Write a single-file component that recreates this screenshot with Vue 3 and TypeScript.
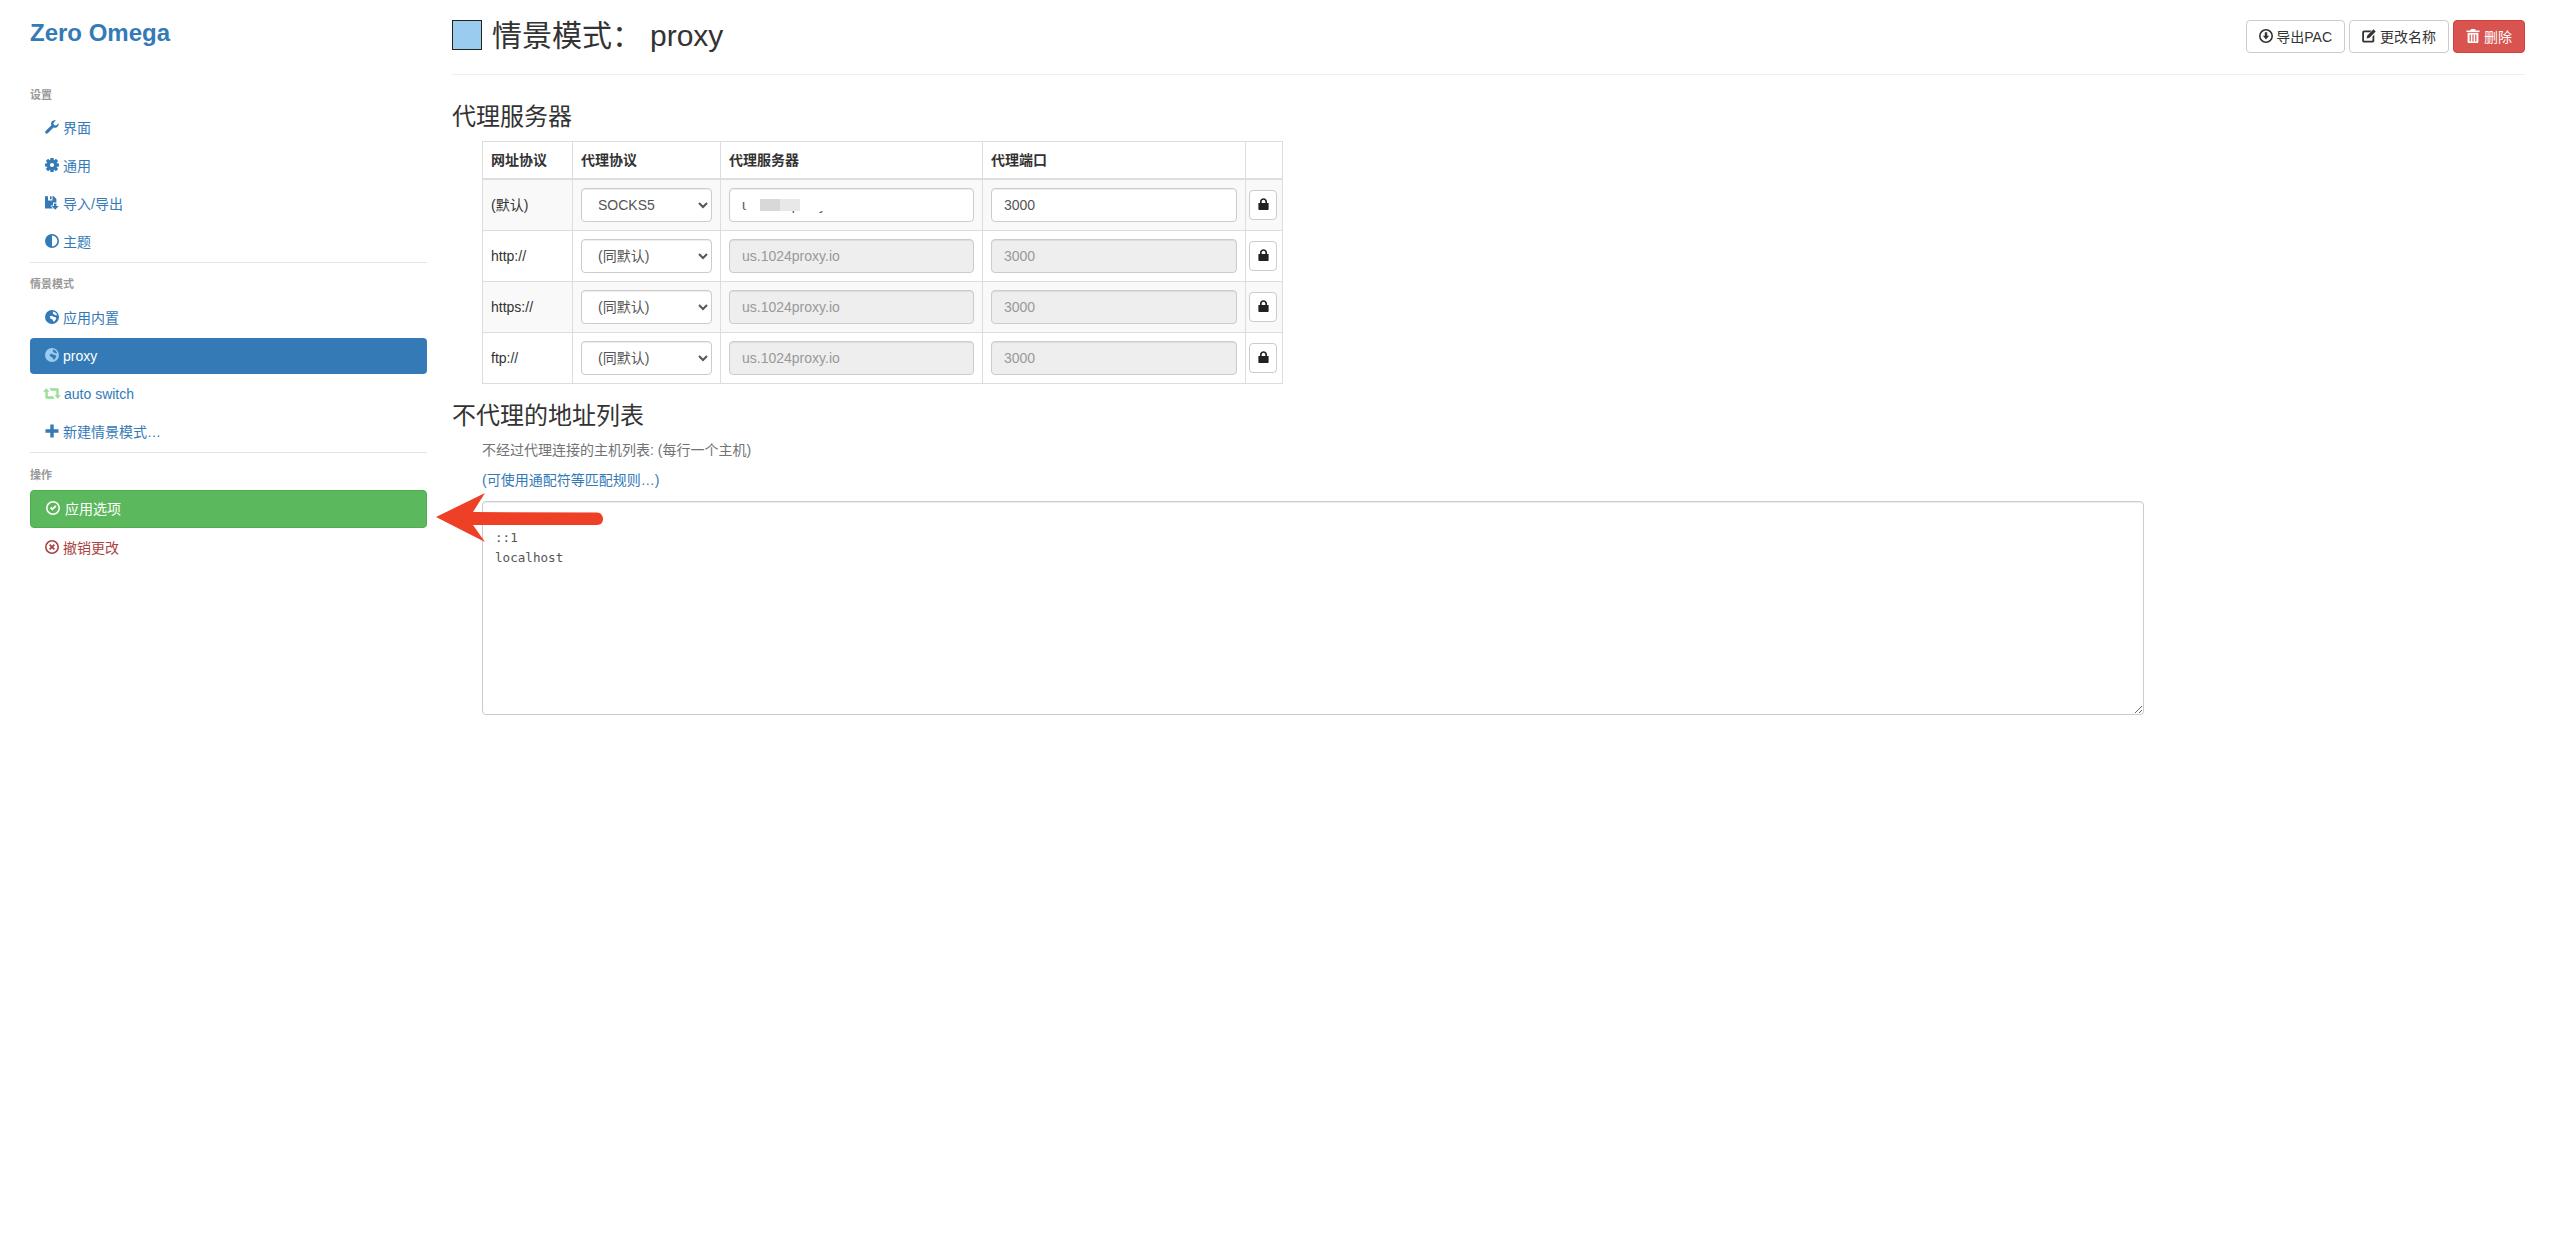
<script setup lang="ts">
function cogPath(): string {
  const teeth = 8
  const cx = 7
  const cy = 7
  let d = ''
  for (let i = 0; i < teeth; i++) {
    const a = (i / teeth) * Math.PI * 2
    const pts: [number, number][] = [
      [5.2, a - 0.36],
      [7.3, a - 0.22],
      [7.3, a + 0.22],
      [5.2, a + 0.36],
    ]
    for (const [r, t] of pts) {
      const x = (cx + r * Math.cos(t)).toFixed(2)
      const y = (cy + r * Math.sin(t)).toFixed(2)
      d += (d ? 'L' : 'M') + x + ' ' + y
    }
  }
  d += 'Z'
  d += 'M7 4.9A2.1 2.1 0 1 0 7 9.1A2.1 2.1 0 1 0 7 4.9Z'
  return d
}

const circle = 'M7 0A7 7 0 1 0 7 14A7 7 0 1 0 7 0Z'
const ringHole = 'M7 1.6A5.4 5.4 0 1 1 7 12.4A5.4 5.4 0 1 1 7 1.6Z'

const icons: Record<string, string> = {
  wrench:
    'M13.6 3.2L11.1 5.6L8.9 5L8.4 2.9L10.8.5C9 -.1 7.1.6 6.4 2.2C5.9 3.3 6 4.4 6.4 5.3L.6 11C0 11.7 0 12.6.6 13.2C1.2 13.8 2.1 13.8 2.8 13.2L8.5 7.6C9.6 8 10.8 8 11.8 7.3C13.2 6.4 14 4.8 13.6 3.2Z',
  cog: cogPath(),
  save: 'M0 .3H3V4.5H7.5V.3H8.9L11.4 3V6.5H8V9.5H5.5L7.8 12.5H0ZM5 .3H6.6V3.2H5ZM9 7.5H11.4V10H13.8L10.2 13.7L6.6 10H9Z',
  adjust: circle + 'M7 1.6A5.4 5.4 0 0 1 7 12.4Z',
  globe:
    circle +
    'M8 1.6C10 2 11.8 3.4 12.3 5.4L10.8 4.7L10.4 5.6L9 4.6L7.8 3.2ZM4.6 6.3L6.8 5.8L9 7L10.8 7.2L11.3 8.6L9.7 11.2L8.2 11.4L7.6 9.4L5.6 8.7Z',
  retweet:
    'M3.5 1L7 4.6H5V9.5H10.5L12.5 12H3.5C3 12 2.5 11.5 2.5 11V4.6H0ZM6.5 1H15.5C16 1 16.5 1.5 16.5 2V8.4H19L15.5 12L12 8.4H14V3.5H8.5Z',
  plus: 'M5.3 .5H8.7V5.3H13.5V8.7H8.7V13.5H5.3V8.7H.5V5.3H5.3Z',
  ok: circle + ringHole + 'M3.9 7.2L5.3 5.8L6.4 6.9L9.2 4.3L10.5 5.6L6.4 9.6Z',
  remove:
    circle +
    ringHole +
    'M4 5.3L5.3 4L7 5.7L8.7 4L10 5.3L8.3 7L10 8.7L8.7 10L7 8.3L5.3 10L4 8.7L5.7 7Z',
  download: circle + ringHole + 'M5.8 3.2H8.2V6.8H10.2L7 10.6L3.8 6.8H5.8Z',
  edit:
    'M2 1.5H9.5L8 3.3H2.6C2.3 3.3 2 3.6 2 3.9V11.2C2 11.5 2.3 11.8 2.6 11.8H9.9C10.2 11.8 10.5 11.5 10.5 11.2V7.5L12.3 5.8V11.8C12.3 12.9 11.4 13.6 10.4 13.6H2.2C1 13.6.2 12.8.2 11.7V3.4C.2 2.3 1 1.5 2 1.5ZM11.5.3L13.7 2.5L7.6 8.7L4.6 9.4L5.3 6.4Z',
  trash:
    'M5 0H9L9.6 1.4H13.5V3H.5V1.4H4.4ZM1.6 3.8H12.4V13C12.4 13.5 11.9 14 11.4 14H2.6C2.1 14 1.6 13.5 1.6 13ZM3.6 5.4V12.6H4.8V5.4ZM6.4 5.4V12.6H7.6V5.4ZM9.2 5.4V12.6H10.4V5.4Z',
  lock:
    'M3.2 5.5V4C3.2 2 5 .3 7 .3C9 .3 10.8 2 10.8 4V5.5H12.5V12.2C12.5 12.7 12.1 13 11.7 13H2.3C1.9 13 1.5 12.7 1.5 12.2V5.5ZM5 5.5H9V4C9 2.9 8 2 7 2C6 2 5 2.9 5 4Z',
}

const settings = [
  { icon: 'wrench', label: '界面' },
  { icon: 'cog', label: '通用' },
  { icon: 'save', label: '导入/导出' },
  { icon: 'adjust', label: '主题' },
]

const rows = [
  { scheme: '(默认)', proxy: 'SOCKS5', main: true },
  { scheme: 'http://', proxy: '(同默认)', main: false },
  { scheme: 'https://', proxy: '(同默认)', main: false },
  { scheme: 'ftp://', proxy: '(同默认)', main: false },
]

const bypass = '127.0.0.1\n::1\nlocalhost'
</script>

<template>
  <div class="page">
    <aside class="side">
      <h1 class="brand">Zero Omega</h1>

      <div class="nav-label first">设置</div>
      <a v-for="s in settings" :key="s.icon" class="nav-item">
        <svg class="ico" viewBox="0 0 14 14"><path :d="icons[s.icon]" fill-rule="evenodd" /></svg>
        <span>{{ s.label }}</span>
      </a>
      <div class="divider"></div>

      <div class="nav-label">情景模式</div>
      <a class="nav-item">
        <svg class="ico" viewBox="0 0 14 14"><path :d="icons.globe" fill-rule="evenodd" /></svg>
        <span>应用内置</span>
      </a>
      <a class="nav-item active">
        <svg class="ico light" viewBox="0 0 14 14"><path :d="icons.globe" fill-rule="evenodd" /></svg>
        <span>proxy</span>
      </a>
      <a class="nav-item">
        <svg class="ico retweet" viewBox="0 0 19 13"><path :d="icons.retweet" /></svg>
        <span>auto switch</span>
      </a>
      <a class="nav-item">
        <svg class="ico" viewBox="0 0 14 14"><path :d="icons.plus" /></svg>
        <span>新建情景模式…</span>
      </a>
      <div class="divider"></div>

      <div class="nav-label ops">操作</div>
      <a class="nav-item apply">
        <svg class="ico" viewBox="0 0 14 14"><path :d="icons.ok" fill-rule="evenodd" /></svg>
        <span>应用选项</span>
      </a>
      <a class="nav-item revert">
        <svg class="ico" viewBox="0 0 14 14"><path :d="icons.remove" fill-rule="evenodd" /></svg>
        <span>撤销更改</span>
      </a>
    </aside>

    <main class="main">
      <header class="head">
        <h2 class="title">
          <span class="swatch"></span>
          <span>情景模式：</span>
          <span class="name">proxy</span>
        </h2>
        <div class="actions">
          <button class="btn">
            <svg class="ico" viewBox="0 0 14 14"><path :d="icons.download" fill-rule="evenodd" /></svg>
            导出PAC
          </button>
          <button class="btn">
            <svg class="ico" viewBox="0 0 14 14"><path :d="icons.edit" fill-rule="evenodd" /></svg>
            更改名称
          </button>
          <button class="btn danger">
            <svg class="ico" viewBox="0 0 14 14"><path :d="icons.trash" fill-rule="evenodd" /></svg>
            删除
          </button>
        </div>
      </header>

      <h3 class="section first-section">代理服务器</h3>
      <table class="servers">
        <colgroup>
          <col class="c1" />
          <col class="c2" />
          <col class="c3" />
          <col class="c4" />
          <col class="c5" />
        </colgroup>
        <thead>
          <tr>
            <th>网址协议</th>
            <th>代理协议</th>
            <th>代理服务器</th>
            <th>代理端口</th>
            <th></th>
          </tr>
        </thead>
        <tbody>
          <tr v-for="r in rows" :key="r.scheme">
            <td>{{ r.scheme }}</td>
            <td>
              <select class="control">
                <option>{{ r.proxy }}</option>
              </select>
            </td>
            <td>
              <div class="host-wrap">
                <input class="control" type="text" value="us.1024proxy.io" :disabled="!r.main" />
                <div v-if="r.main" class="mask">
                  <i class="m1"></i><i class="m2"></i>
                </div>
              </div>
            </td>
            <td>
              <input class="control" type="text" value="3000" :disabled="!r.main" />
            </td>
            <td class="lock-cell">
              <button class="btn lock">
                <svg class="ico" viewBox="0 0 14 14"><path :d="icons.lock" fill-rule="evenodd" /></svg>
              </button>
            </td>
          </tr>
        </tbody>
      </table>

      <h3 class="section second-section">不代理的地址列表</h3>
      <p class="help">不经过代理连接的主机列表: (每行一个主机)</p>
      <p class="link">(可使用通配符等匹配规则…)</p>
      <textarea class="bypass" :value="bypass" spellcheck="false"></textarea>
    </main>

    <svg class="arrow" viewBox="0 0 180 60" width="180" height="60">
      <path
        d="M1 25L50 1L38 20L162 20.5C166 20.5 168 24 168 27C168 30 166 33 162 33L38 33L50 50Z"
        fill="#ee4026"
      />
    </svg>
  </div>
</template>

<style>
html,
body {
  margin: 0;
  background: #fff;
}
</style>

<style scoped>
.page {
  position: relative;
  display: flex;
  width: 2560px;
  min-height: 1236px;
  font-family: "Liberation Sans", "Noto Sans CJK SC", sans-serif;
  font-size: 14px;
  line-height: 20px;
  color: #333;
  overflow: hidden;
}

.side {
  flex: none;
  width: 397px;
  margin-left: 30px;
}

.brand {
  margin: 20px 0 0;
  font-size: 24px;
  line-height: 26px;
  font-weight: 700;
  color: #337ab7;
}

.nav-label {
  margin-top: 11px;
  font-size: 11px;
  line-height: 20px;
  font-weight: 700;
  color: #999;
}

.nav-label.first {
  margin-top: 39px;
  margin-bottom: 5px;
}

.nav-label + .nav-item {
  margin-top: 6px;
}

.nav-label.first + .nav-item {
  margin-top: 0;
}

.nav-label.ops {
  margin-top: 12px;
}

.nav-label.ops + .nav-item {
  margin-top: 5px;
}

.nav-item {
  display: flex;
  align-items: center;
  gap: 4px;
  height: 36px;
  margin-top: 2px;
  padding: 0 15px;
  border-radius: 4px;
  color: #337ab7;
  box-sizing: border-box;
}

.ico {
  flex: none;
  width: 14px;
  height: 14px;
  fill: currentColor;
  position: relative;
  top: -1px;
}

.ico.retweet {
  width: 18px;
  height: 13px;
  margin-left: -2px;
  margin-right: -1px;
  fill: #99dd99;
}

.ico.light {
  fill: #99ccee;
}

.nav-item.active {
  background: #337ab7;
  color: #fff;
}

.nav-item.apply {
  height: 38px;
  background: #5cb85c;
  border: 1px solid #4cae4c;
  color: #fff;
  gap: 5px;
}

.nav-item.revert {
  color: #a94442;
}

.divider {
  height: 1px;
  margin-top: 2px;
  background: #e5e5e5;
}

.main {
  flex: none;
  width: 2073px;
  margin-left: 25px;
}

.head {
  display: flex;
  justify-content: space-between;
  align-items: flex-start;
  height: 75px;
  padding-top: 20px;
  box-sizing: border-box;
  border-bottom: 1px solid #eee;
}

.title {
  display: flex;
  align-items: center;
  margin: -1px 0 0;
  font-size: 30px;
  line-height: 33px;
  font-weight: 400;
}

.swatch {
  width: 30px;
  height: 30px;
  margin-right: 10px;
  box-sizing: border-box;
  background: #99ccee;
  border: 1px solid #222;
  position: relative;
  top: -1px;
}

.name {
  margin-left: 8px;
}

.actions {
  display: flex;
  gap: 4px;
}

.btn {
  display: inline-flex;
  align-items: center;
  gap: 4px;
  height: 33px;
  padding: 0 12px;
  box-sizing: border-box;
  background: #fff;
  border: 1px solid #ccc;
  border-radius: 4px;
  font: inherit;
  color: #333;
}

.actions .btn:first-child {
  gap: 3px;
}

.btn .ico {
  width: 14px;
  height: 14px;
}

.btn.danger {
  background: #d9534f;
  border-color: #d43f3a;
  color: #fff;
}

.section {
  margin: 0;
  font-size: 24px;
  line-height: 26px;
  font-weight: 400;
}

.first-section {
  margin-top: 29px;
}

.second-section {
  margin-top: 19px;
}

.servers {
  width: 800px;
  margin: 11px 0 0 30px;
  table-layout: fixed;
  border-collapse: collapse;
  border: 1px solid #ddd;
}

.c1 {
  width: 90px;
}
.c2 {
  width: 148px;
}
.c3 {
  width: 262px;
}
.c4 {
  width: 263px;
}
.c5 {
  width: 37px;
}

.servers th,
.servers td {
  border: 1px solid #ddd;
  padding: 8px;
  text-align: left;
  vertical-align: middle;
}

.servers th {
  height: 20px;
  border-bottom-width: 2px;
  font-weight: 700;
}

.servers tbody tr:nth-child(odd) {
  background: #f9f9f9;
}

.servers .lock-cell {
  padding: 8px 3px;
}

.control {
  display: block;
  width: 100%;
  height: 34px;
  padding: 6px 12px;
  box-sizing: border-box;
  font: inherit;
  color: #555;
  background-color: #fff;
  border: 1px solid #ccc;
  border-radius: 4px;
  box-shadow: inset 0 1px 1px rgba(0, 0, 0, 0.075);
}

.control:disabled {
  background-color: #eee;
  color: #999;
  -webkit-text-fill-color: #999;
  opacity: 1;
}

.host-wrap {
  position: relative;
}

.mask {
  position: absolute;
  left: 17px;
  top: 11px;
  width: 95px;
  height: 12px;
  background: #fff;
}

.mask i {
  position: absolute;
  top: 0;
  width: 20px;
  height: 12px;
}

.m1 {
  left: 14px;
  background: #d8d8d8;
}

.m2 {
  left: 34px;
  background: #e8e8e8;
}

.btn.lock {
  justify-content: center;
  width: 28px;
  height: 30px;
  padding: 0;
}

.btn.lock .ico {
  width: 13px;
  height: 13px;
  fill: #222;
}

.help {
  margin: 11px 0 0 30px;
  color: #737373;
}

.link {
  margin: 10px 0 0 30px;
  color: #337ab7;
}

.bypass {
  display: block;
  width: 1662px;
  height: 214px;
  margin: 11px 0 0 30px;
  padding: 6px 12px;
  box-sizing: border-box;
  font-family: "DejaVu Sans Mono", "Liberation Mono", monospace;
  font-size: 12.6px;
  line-height: 20px;
  color: #555;
  background: #fff;
  border: 1px solid #ccc;
  border-radius: 4px;
  box-shadow: inset 0 1px 1px rgba(0, 0, 0, 0.075);
  outline: none;
}

.arrow {
  position: absolute;
  left: 435px;
  top: 492px;
}
</style>
